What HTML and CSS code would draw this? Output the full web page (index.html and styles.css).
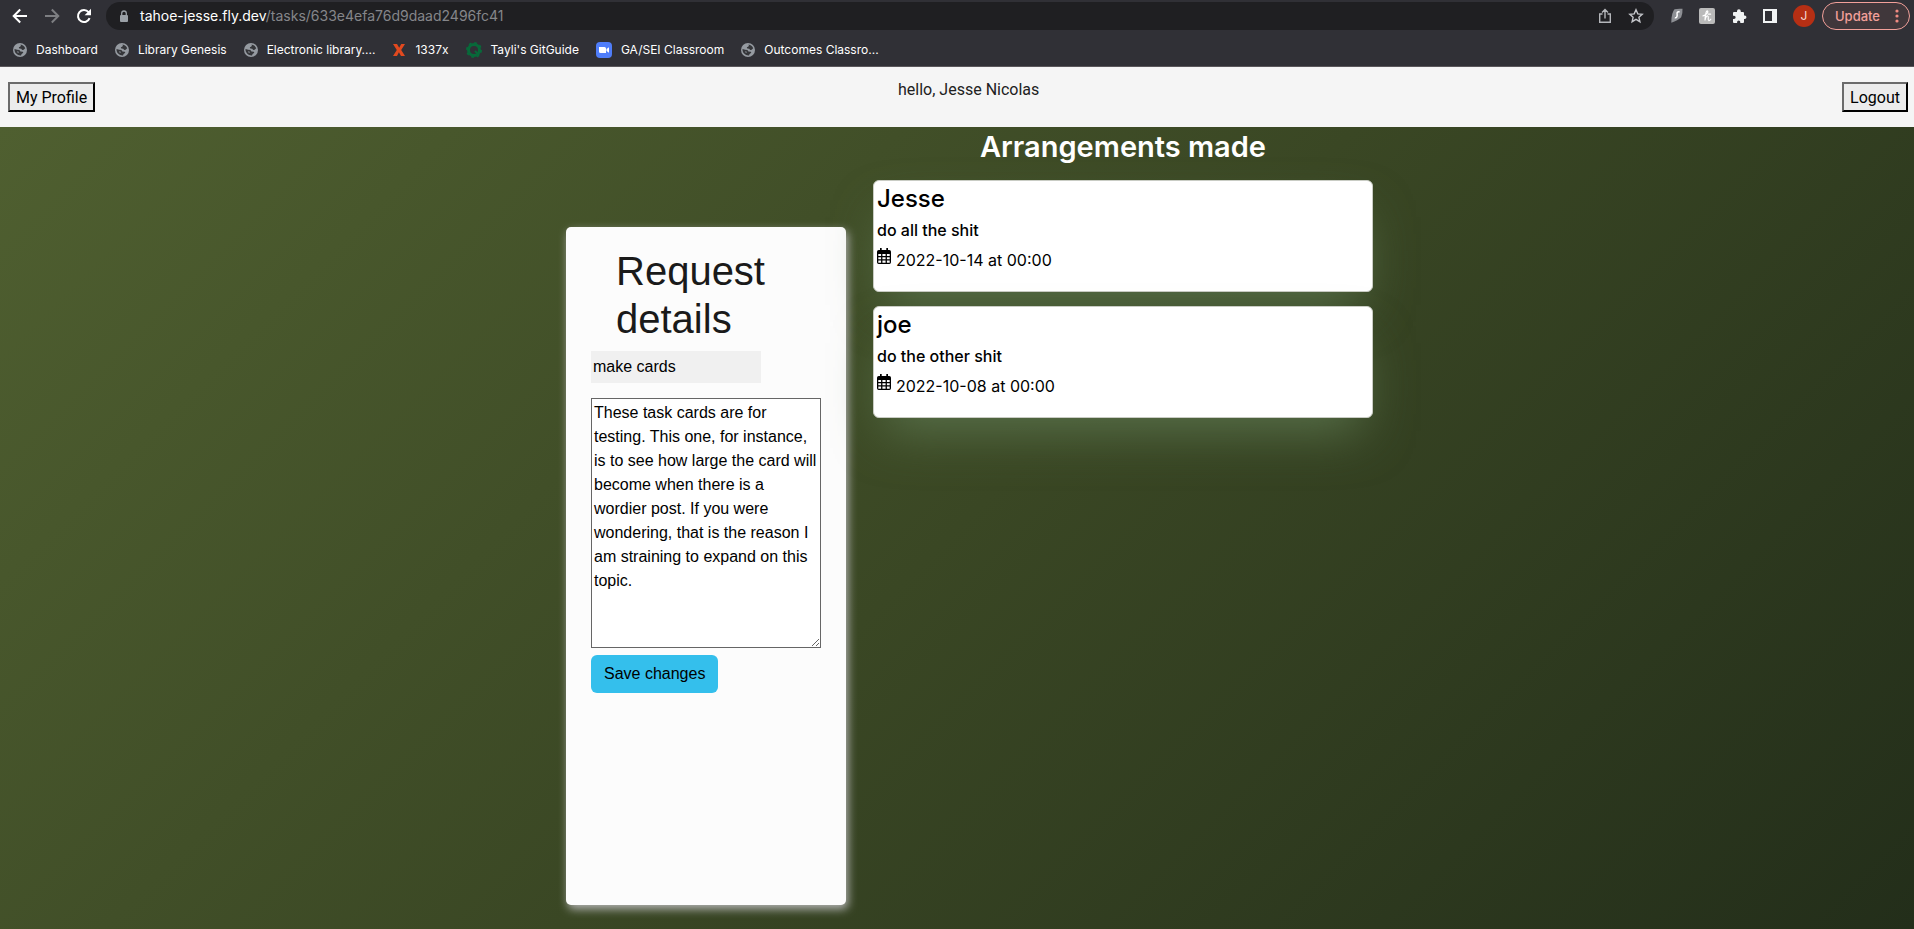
FILE: index.html
```html
<!DOCTYPE html>
<html lang="en">
<head>
<meta charset="utf-8">
<title>Request details</title>
<link rel="stylesheet" href="styles.css">
</head>
<body>
<svg class="defs" width="0" height="0" aria-hidden="true">
  <symbol id="globe" viewBox="0 0 14 14">
    <circle cx="7" cy="7" r="7" fill="#959aa1"/>
    <path d="M7.500 1.500c2.200.3 3.900 1.700 4.700 3.700l-1.500 1.600-1.500.1-1-1.200-1.900-.2-.5-1.200 1.300-.6.800-1zM1.500 6l2.700.8 2.200.2 1 1.400 2.400.3.500 1-1.700 1.400-.6 1.300C4.400 12.600 1.200 9.800 1.500 6zm2.300 2.500 1 1.300 1.200-.2-.6-1.100z" fill="#35363a"/>
  </symbol>
  <symbol id="calendar" viewBox="0 0 14 16">
    <path fill-rule="evenodd" d="M3 0h1.700v2h4.600V0H11v2h1.300Q14 2 14 3.700V14.300Q14 16 12.300 16H1.700Q0 16 0 14.300V3.700Q0 2 1.700 2H3zM1.300 6v2.100h2.800V6zm4.100 0v2.100h3.200V6zm4.500 0v2.100h2.800V6zM1.300 9.300v2h2.800v-2zm4.100 0v2h3.200v-2zm4.500 0v2h2.800v-2zM1.300 12.500v2.200h2.800v-2.200zm4.100 0v2.200h3.200v-2.200zm4.500 0v2.200h2.800v-2.200z"/>
  </symbol>
</svg>
<div class="browser">
  <div class="toolbar">
    <button class="tool" aria-label="Back"><svg width="16" height="16" viewBox="0 0 16 16"><path d="M15 8H2M8.200 1.500 1.700 8l6.500 6.500" fill="none" stroke="#fff" stroke-width="2"/></svg></button>
    <button class="tool" aria-label="Forward"><svg width="16" height="16" viewBox="0 0 16 16"><path d="M1 8h13M7.800 1.500 14.300 8l-6.500 6.500" fill="none" stroke="#7d7e82" stroke-width="2"/></svg></button>
    <button class="tool" aria-label="Reload"><svg width="16" height="16" viewBox="0 0 16 16"><path d="M13.600 10.200A6 6 0 1 1 12.600 4.200L14 5.700" fill="none" stroke="#fff" stroke-width="2"/><path d="M15 .8v6.400H8.600z" fill="#fff"/></svg></button>
    <div class="address">
      <svg width="10" height="13" viewBox="0 0 10 13"><rect x="1" y="5" width="8" height="7" rx="1" fill="#9aa0a6"/><path d="M2.700 6V3.300a2.300 2.300 0 0 1 4.600 0V6" fill="none" stroke="#9aa0a6" stroke-width="1.300"/></svg>
      <span class="url"><b>tahoe-jesse.fly.dev</b>/tasks/633e4efa76d9daad2496fc41</span>
      <button class="tool" aria-label="Share"><svg width="14" height="16" viewBox="0 0 14 16"><path d="M4.500 6H1.700v8.200h10.600V6H9.500M7 10.500V1.800M4 4.500l3-3 3 3" fill="none" stroke="#b4b6ba" stroke-width="1.400"/></svg></button>
      <button class="tool" aria-label="Bookmark"><svg width="16" height="16" viewBox="0 0 16 16"><path d="m8 1.800 1.800 4.100 4.400.4-3.300 3 1 4.400L8 11.400l-3.900 2.300 1-4.400-3.300-3 4.400-.4z" fill="none" stroke="#c4c6ca" stroke-width="1.400"/></svg></button>
    </div>
    <div class="extensions">
      <svg width="12" height="16" viewBox="0 0 12 16"><path d="M3.500 1.300Q7 .3 11.500.8 11.800 5 10.200 9.300 7 12.500.3 14.800.2 5 3.500 1.300z" fill="#8d8f94"/><path d="M8.600 4C6.800 3.200 5.700 4.500 6.100 6.200S5.700 10.300 3.800 9.700" fill="none" stroke="#fff" stroke-width="1.500"/></svg>
      <svg width="16" height="16" viewBox="0 0 16 16"><rect width="16" height="16" rx="2" fill="#bababa"/><path d="M4 7.800C6.800 7.300 9.400 4.800 8.800 3.300 7.800 1.800 6.200 4.500 6 12.500 6.300 9.600 7.600 7.700 8.800 8c1.500.4-.6 4.300 1 4.600.9.100 1.500-.6 2-1.400M9.300 6.200h2.300" fill="none" stroke="#fff" stroke-width="1.200" stroke-linecap="round"/></svg>
      <svg width="16" height="16" viewBox="0 0 16 16"><path d="M6 3.200a1.900 1.900 0 0 1 3.800 0V4H12q1 0 1 1v2.500h.7a1.700 1.700 0 0 1 0 3.500H13v3q0 1-1 1H9.300v-1a1.600 1.600 0 0 0-3.200 0v1H3q-1 0-1-1v-3h1a1.600 1.600 0 0 0 0-3.300H2V5q0-1 1-1h3z" fill="#f1f3f4"/></svg>
      <svg width="14" height="14" viewBox="0 0 14 14"><path fill-rule="evenodd" d="M0 0h14v14H0zM2 2v10h7V2z" fill="#f1f3f4"/></svg>
    </div>
    <span class="avatar">J</span>
    <button class="update">Update<svg width="4" height="14" viewBox="0 0 4 14" fill="#f28b82"><circle cx="2" cy="2" r="1.600"/><circle cx="2" cy="7" r="1.600"/><circle cx="2" cy="12" r="1.600"/></svg></button>
  </div>
  <nav class="bookmarks">
    <a href="#"><svg width="14" height="14"><use href="#globe"/></svg>Dashboard</a>
    <a href="#"><svg width="14" height="14"><use href="#globe"/></svg>Library Genesis</a>
    <a href="#"><svg width="14" height="14"><use href="#globe"/></svg>Electronic library....</a>
    <a href="#"><svg width="14" height="14" viewBox="0 0 14 14"><path d="M1 1h4l2.200 3.700L9.200 1H13L9.200 7l3.800 6H9L6.900 9.300 5 13H1l3.800-6z" fill="#e1491f"/></svg>1337x</a>
    <a href="#"><svg width="16" height="16" viewBox="0 0 16 16"><circle cx="8" cy="8" r="5.500" fill="none" stroke="#08693a" stroke-width="3"/><circle cx="8" cy="8" r="7" fill="none" stroke="#08693a" stroke-width="2" stroke-dasharray="2.700 2.800"/><path d="m9 9 4 4" stroke="#08693a" stroke-width="2"/></svg>Tayli's GitGuide</a>
    <a href="#"><svg width="16" height="16" viewBox="0 0 16 16"><rect width="16" height="16" rx="4" fill="#4f7df9"/><path d="M3 5h5.500q1.500 0 1.500 1.500V11H4.500Q3 11 3 9.500zM10.500 7 13 5.300v5.400L10.500 9z" fill="#fff"/></svg>GA/SEI Classroom</a>
    <a href="#"><svg width="14" height="14"><use href="#globe"/></svg>Outcomes Classro...</a>
  </nav>
</div>
<header class="site-header">
  <button class="nav-button">My Profile</button>
  <p class="greeting">hello, Jesse Nicolas</p>
  <button class="nav-button">Logout</button>
</header>
<main class="page">
  <form class="request">
    <h1>Request details</h1>
    <input type="text" value="make cards" aria-label="Task">
    <textarea aria-label="Description">These task cards are for testing. This one, for instance, is to see how large the card will become when there is a wordier post. If you were wondering, that is the reason I am straining to expand on this topic.</textarea>
    <button type="button">Save changes</button>
  </form>
  <section class="arrangements">
    <h2>Arrangements made</h2>
    <article class="card">
      <h3>Jesse</h3>
      <h4>do all the shit</h4>
      <p><svg width="14" height="16"><use href="#calendar"/></svg>2022-10-14 at 00:00</p>
    </article>
    <article class="card">
      <h3>joe</h3>
      <h4>do the other shit</h4>
      <p><svg width="14" height="16"><use href="#calendar"/></svg>2022-10-08 at 00:00</p>
    </article>
  </section>
</main>
</body>
</html>
```
FILE: styles.css
```css
* { box-sizing: border-box; }
body {
  margin: 0;
  min-height: 100vh;
  display: flex;
  flex-direction: column;
  font-family: Inter, "Liberation Sans", sans-serif;
  font-size: 16px;
  line-height: 24px;
  color: #000;
}
h1, h2, h3, h4, p { margin: 0; }
button { font-family: inherit; cursor: pointer; }
svg { flex: none; display: block; }
.defs { position: absolute; }

.browser { background: #303036; border-bottom: 1px solid #5a575b; }
.toolbar { display: flex; align-items: center; height: 32px; padding: 0 4px 0 12px; }
.tool { display: flex; padding: 0; border: 0; background: none; }
.toolbar > .tool { margin-right: 16px; }
.toolbar > .tool + .tool + .tool { margin-right: 14px; }
.address {
  flex: 1;
  display: flex;
  align-items: center;
  height: 28px;
  margin-right: 17px;
  padding: 0 10px 0 13px;
  border-radius: 14px;
  background: #1f1f22;
}
.address .tool { margin-left: 16px; }
.url { flex: 1; margin-left: 11px; font-size: 14px; color: #85868a; }
.url b { font-weight: 400; color: #fff; }
.extensions { display: flex; align-items: center; gap: 16px; }
.avatar {
  width: 22px;
  height: 22px;
  margin: 0 7px 0 16px;
  border-radius: 50%;
  background: #b62f14;
  color: #f7d9d3;
  font-size: 12px;
  line-height: 22px;
  text-align: center;
}
.update {
  display: flex;
  align-items: center;
  gap: 15px;
  height: 28px;
  padding: 0 10px 0 12px;
  border: 1px solid #f2a09a;
  border-radius: 14px;
  background: #40373b;
  color: #f2a09a;
  font-size: 13px;
  font-weight: 500;
}
.bookmarks { display: flex; align-items: center; gap: 17px; height: 34px; padding: 2px 13px 0; }
.bookmarks a {
  display: flex;
  align-items: center;
  gap: 9px;
  color: #fff;
  font-size: 12px;
  text-decoration: none;
}

.site-header {
  display: flex;
  justify-content: space-between;
  height: 60px;
  padding: 0 6px 0 8px;
  background: #f5f5f5;
  font-family: Roboto, "Liberation Sans", sans-serif;
  color: #212121;
}
.greeting { margin-top: 11px; }
.nav-button {
  align-self: center;
  height: 30px;
  padding: 0 6px;
  border: 2px outset #000;
  border-color: #6b6b6b #1c1c1c #1c1c1c #6b6b6b;
  background: #ececec;
  font-size: 16px;
}

.page {
  flex: 1;
  display: flex;
  justify-content: center;
  gap: 27px;
  padding: 0 0 24px 25px;
  background: linear-gradient(135deg, #4f5f30, #3a4724 50%, #232e1a);
}
.request {
  display: flex;
  flex-direction: column;
  align-items: flex-start;
  width: 280px;
  margin-top: 100px;
  padding: 20px 25px;
  border-radius: 5px;
  background: #fcfcfc;
  box-shadow: 2px 4px 10px #b4b4b4;
  font-family: "Liberation Sans", Arial, sans-serif;
  color: #1a1a1a;
}
.request h1 { margin: 0 25px 8px; font-size: 40px; font-weight: 400; line-height: 48px; }
.request input {
  width: 170px;
  height: 32px;
  margin-bottom: 15px;
  padding: 2px;
  border: 0;
  background: #f0f0f0;
  font: inherit;
  color: #000;
}
.request textarea {
  width: 230px;
  height: 250px;
  padding: 2px;
  border: 1px solid #666;
  background: #fff;
  font: inherit;
  color: #000;
}
.request button {
  margin-top: 7px;
  padding: 7px 13px;
  border: 0;
  border-radius: 6px;
  background: #34bfec;
  font: inherit;
  color: #000;
}
.arrangements { width: 500px; }
.arrangements h2 { margin-bottom: 13px; font-size: 29px; font-weight: 600; line-height: 40px; text-align: center; color: #fff; }
.card {
  height: 112px;
  margin-bottom: 14px;
  padding: 4px 3px;
  border: 1px solid #c9ccc4;
  border-radius: 6px;
  background: #fff;
  box-shadow: 0 25px 50px -12px #58704a;
}
.card h3 { font-size: 24px; font-weight: 500; line-height: 28px; }
.card h4 { margin-top: 5px; font-size: 16px; font-weight: 500; }
.card p { display: flex; gap: 5px; margin-top: 6px; }
```
